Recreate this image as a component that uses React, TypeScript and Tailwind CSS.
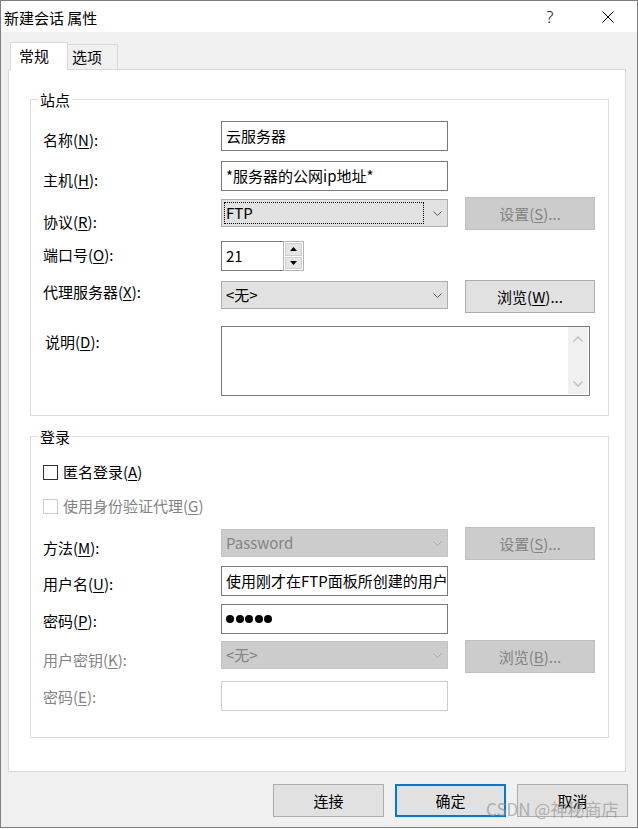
import React from "react";

type Kids = { children?: React.ReactNode };

const Mn = ({ children }: Kids) => <span className="underline decoration-1 underline-offset-[2px]">{children}</span>;

const Chevron = ({ color }: { color: string }) => (
    <svg width="9" height="5" viewBox="0 0 9 5" className="shrink-0">
        <path d="M0.5 0.5L4.5 4.5L8.5 0.5" fill="none" stroke={color} strokeWidth="1" />
    </svg>
);

const Label = ({ pad, disabled, children }: Kids & { pad: string; disabled?: boolean }) => (
    <div className={`w-[178px] shrink-0 text-[15px] leading-[20px] whitespace-nowrap ${pad} ${disabled ? "text-[#838383]" : "text-black"}`}>
        {children}
    </div>
);

const TextBox = ({ disabled, children }: Kids & { disabled?: boolean }) => (
    <div
        className={`w-[227px] h-[30px] border bg-white flex items-center pl-[4px] overflow-hidden whitespace-nowrap text-[15px] leading-[20px] ${
            disabled ? "border-[#cccccc]" : "border-[#7a7a7a]"
        }`}
    >
        {children}
    </div>
);

const Combo = ({ mt, disabled, focused, children }: Kids & { mt: string; disabled?: boolean; focused?: boolean }) => (
    <div
        className={`${mt} w-[227px] h-[28px] border flex items-center text-[15px] leading-[20px] ${
            disabled ? "bg-[#cccccc] border-[#c4c4c4] text-[#838383]" : "bg-[#e1e1e1] border-[#adadad] text-black"
        }`}
    >
        {focused ? (
            <div className="ml-[2px] w-[200px] h-[22px] border border-dotted border-black flex items-center pl-[1px]">{children}</div>
        ) : (
            <div className="pl-[4px]">{children}</div>
        )}
        <div className="ml-auto mr-[5px] flex">
            <Chevron color={disabled ? "#a8a8a8" : "#555555"} />
        </div>
    </div>
);

const SideBtn = ({ disabled, children }: Kids & { disabled?: boolean }) => (
    <div
        className={`ml-[17px] w-[130px] h-[33px] border flex items-center justify-center text-[15px] leading-[20px] ${
            disabled ? "bg-[#cccccc] border-[#bfbfbf] text-[#838383]" : "bg-[#e1e1e1] border-[#adadad] text-black"
        }`}
    >
        {children}
    </div>
);

const Group = ({ title, className, children }: Kids & { title: string; className: string }) => (
    <div className={`relative ml-[21px] w-[579px] border border-[#dcdcdc] ${className}`}>
        <span className="absolute left-[7px] -top-[10px] bg-white px-[2px] text-[15px] leading-[20px] text-black">{title}</span>
        {children}
    </div>
);

const CheckRow = ({ disabled, className, children }: Kids & { disabled?: boolean; className: string }) => (
    <div className={`flex items-center h-[20px] ${className}`}>
        <div className={`w-[15px] h-[15px] border bg-white ${disabled ? "border-[#cccccc]" : "border-[#333333]"}`} />
        <span className={`ml-[5px] text-[15px] leading-[20px] ${disabled ? "text-[#838383]" : "text-black"}`}>{children}</span>
    </div>
);

const Spinner = () => (
    <div className="w-[21px] h-[30px] border border-[#b4b4b4] bg-white flex flex-col p-px gap-px">
        <div className="flex-1 bg-[#e5e5e5] border border-[#cfcfcf] flex items-center justify-center">
            <svg width="7" height="4" viewBox="0 0 7 4"><path d="M3.5 0L7 4H0Z" fill="#000" /></svg>
        </div>
        <div className="flex-1 bg-[#e5e5e5] border border-[#cfcfcf] flex items-center justify-center">
            <svg width="7" height="4" viewBox="0 0 7 4"><path d="M0 0H7L3.5 4Z" fill="#000" /></svg>
        </div>
    </div>
);

const DialogBtn = ({ primary, children }: Kids & { primary?: boolean }) => (
    <div
        className={`w-[111px] h-[33px] bg-[#e1e1e1] flex items-center justify-center text-[15px] leading-[20px] text-black ${
            primary ? "border-2 border-[#0078d7]" : "border border-[#adadad]"
        }`}
    >
        {children}
    </div>
);

const App: React.FC = () => {
    return (
        <div className="relative w-[638px] h-[829px] bg-white overflow-hidden font-['Noto_Sans_CJK_SC','Noto_Sans',sans-serif]">
            <div className="w-[638px] h-[828px] border border-[#7f7f7f] flex flex-col">
                {/* title bar */}
                <div className="h-[31px] shrink-0 bg-white flex items-center">
                    <span className="pl-[3px] pt-[2px] text-[15px] leading-[20px] text-black">新建会话 属性</span>
                    <div className="ml-auto flex h-full">
                        <div className="w-[58px] flex items-center justify-center text-[16px] font-light text-black font-['Noto_Sans',sans-serif]">?</div>
                        <div className="w-[58px] flex items-center justify-center">
                            <svg width="12" height="12" viewBox="0 0 12 12">
                                <path d="M0.5 0.5L11.5 11.5M11.5 0.5L0.5 11.5" stroke="#000" strokeWidth="1" />
                            </svg>
                        </div>
                    </div>
                </div>

                {/* body */}
                <div className="flex-1 bg-[#f0f0f0] flex flex-col pt-[10px]">
                    <div className="ml-[9px] h-[27px] flex items-end">
                        <div className="relative z-10 -mb-px w-[58px] h-[28px] border border-b-0 border-[#d9d9d9] bg-white pl-[8px] pt-[3px] text-[15px] leading-[20px] text-black">
                            常规
                        </div>
                        <div className="w-[50px] h-[25px] border-t border-r border-[#d9d9d9] pl-[4px] pt-[2px] text-[15px] leading-[20px] text-black">
                            选项
                        </div>
                    </div>

                    <div className="ml-[7px] w-[618px] h-[703px] border border-[#d9d9d9] bg-white flex flex-col">
                        <Group title="站点" className="mt-[29px] h-[317px] pt-[21px] pl-[12px]">
                            <div className="flex items-start h-[40px]">
                                <Label pad="pt-[9px]">名称(<Mn>N</Mn>):</Label>
                                <TextBox>云服务器</TextBox>
                            </div>
                            <div className="flex items-start h-[36px]">
                                <Label pad="pt-[9px]">主机(<Mn>H</Mn>):</Label>
                                <TextBox>*服务器的公网ip地址*</TextBox>
                            </div>
                            <div className="flex items-start h-[44px]">
                                <Label pad="pt-[15px]">协议(<Mn>R</Mn>):</Label>
                                <Combo mt="mt-[2px]" focused>FTP</Combo>
                                <SideBtn disabled>设置(<Mn>S</Mn>)...</SideBtn>
                            </div>
                            <div className="flex items-start h-[39px]">
                                <Label pad="pt-[4px]">端口号(<Mn>O</Mn>):</Label>
                                <div className="w-[62px] h-[30px] border border-r-0 border-[#7a7a7a] bg-white flex items-center pl-[4px] text-[15px] leading-[20px]">
                                    21
                                </div>
                                <Spinner />
                            </div>
                            <div className="flex items-start h-[46px]">
                                <Label pad="pt-[2px]">代理服务器(<Mn>X</Mn>):</Label>
                                <Combo mt="mt-[1px]">&lt;无&gt;</Combo>
                                <SideBtn>浏览(<Mn>W</Mn>)...</SideBtn>
                            </div>
                            <div className="flex items-start">
                                <Label pad="pt-[6px] pl-[2px]">说明(<Mn>D</Mn>):</Label>
                                <div className="w-[369px] h-[70px] border border-[#7a7a7a] bg-white flex justify-end">
                                    <div className="w-[20px] mr-px mb-px bg-[#f0f0f0] flex flex-col items-center justify-between pt-[9px] pb-[7px]">
                                        <svg width="10" height="6" viewBox="0 0 10 6">
                                            <path d="M0.5 5.5L5 1L9.5 5.5" fill="none" stroke="#c2c2c2" strokeWidth="1.5" />
                                        </svg>
                                        <svg width="10" height="6" viewBox="0 0 10 6">
                                            <path d="M0.5 0.5L5 5L9.5 0.5" fill="none" stroke="#c2c2c2" strokeWidth="1.5" />
                                        </svg>
                                    </div>
                                </div>
                            </div>
                        </Group>

                        <Group title="登录" className="mt-[20px] h-[302px] pt-[25px] pl-[12px]">
                            <CheckRow className="">
                                匿名登录(<Mn>A</Mn>)
                            </CheckRow>
                            <CheckRow className="mt-[14px]" disabled>
                                使用身份验证代理(<Mn>G</Mn>)
                            </CheckRow>
                            <div className="mt-[11px] flex items-start h-[39px]">
                                <Label pad="pt-[11px]">方法(<Mn>M</Mn>):</Label>
                                <Combo mt="mt-[2px]" disabled>Password</Combo>
                                <SideBtn disabled>设置(<Mn>S</Mn>)...</SideBtn>
                            </div>
                            <div className="flex items-start h-[38px]">
                                <Label pad="pt-[8px]">用户名(<Mn>U</Mn>):</Label>
                                <TextBox>使用刚才在FTP面板所创建的用户</TextBox>
                            </div>
                            <div className="flex items-start h-[36px]">
                                <Label pad="pt-[7px]">密码(<Mn>P</Mn>):</Label>
                                <TextBox>
                                    <div className="flex gap-[1.5px]">
                                        {[0, 1, 2, 3, 4].map((i) => (
                                            <div key={i} className="w-[8px] h-[8px] rounded-full bg-black" />
                                        ))}
                                    </div>
                                </TextBox>
                            </div>
                            <div className="flex items-start h-[41px]">
                                <Label pad="pt-[10px]" disabled>
                                    用户密钥(<Mn>K</Mn>):
                                </Label>
                                <Combo mt="mt-[1px]" disabled>&lt;无&gt;</Combo>
                                <SideBtn disabled>浏览(<Mn>B</Mn>)...</SideBtn>
                            </div>
                            <div className="flex items-start">
                                <Label pad="pt-[6px]" disabled>
                                    密码(<Mn>E</Mn>):
                                </Label>
                                <TextBox disabled />
                            </div>
                        </Group>
                    </div>

                    <div className="mt-[12px] flex justify-end gap-[11px] pr-[9px]">
                        <DialogBtn>连接</DialogBtn>
                        <DialogBtn primary>确定</DialogBtn>
                        <DialogBtn>取消</DialogBtn>
                    </div>
                </div>
            </div>

            <span className="absolute left-[486px] top-[797px] text-[17px] leading-[24px] text-[rgba(150,150,150,0.7)] whitespace-nowrap">
                CSDN @神秘商店
            </span>
        </div>
    );
};

export default App;
